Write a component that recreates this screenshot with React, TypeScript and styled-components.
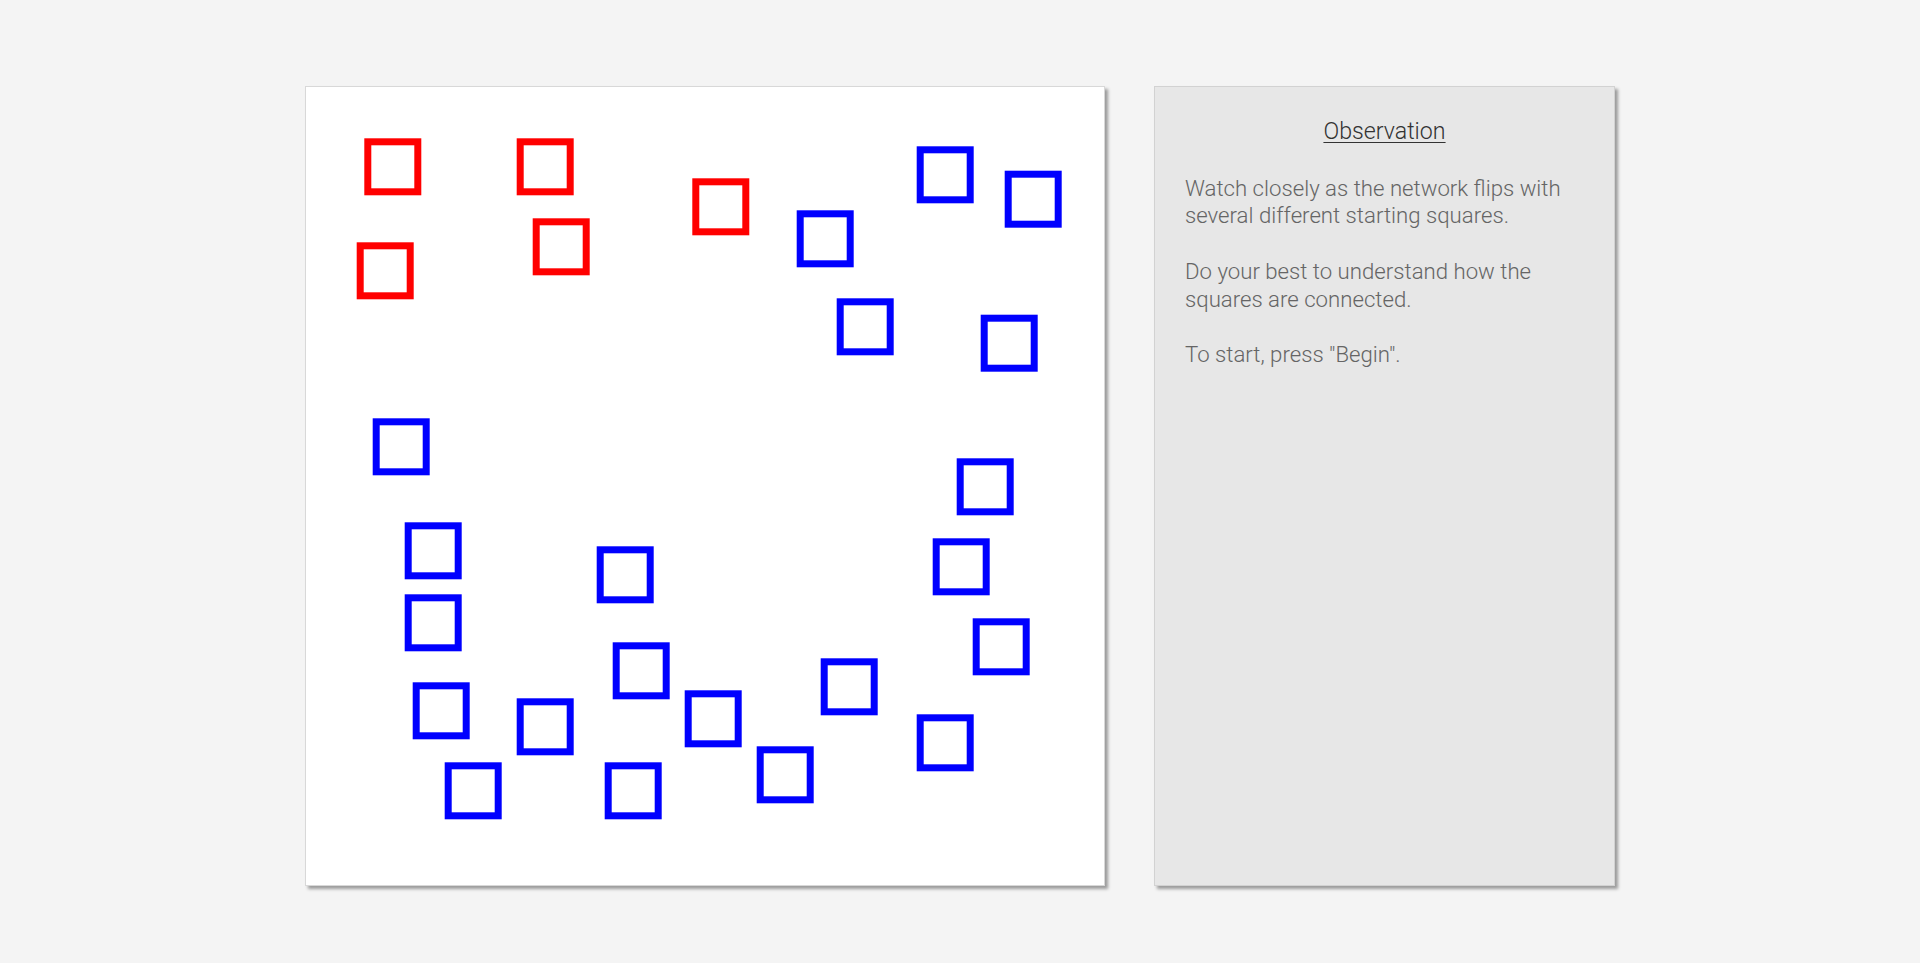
import React from 'react';
import styled, { createGlobalStyle } from 'styled-components';

const GlobalStyle = createGlobalStyle`
  html, body {
    margin: 0;
    padding: 0;
    background: #f4f4f4;
    font-family: Roboto, 'Liberation Sans', Arial, sans-serif;
  }
`;

const Page = styled.div`
  display: flex;
  justify-content: center;
  align-items: flex-start;
  gap: 49px;
  padding-top: 86px;
  min-height: 963px;
  box-sizing: border-box;
`;

const Board = styled.div`
  width: 800px;
  height: 800px;
  box-sizing: border-box;
  background: #ffffff;
  border: 1px solid #d8d8d8;
  box-shadow: 3px 3px 3px #9c9c9c;
`;

const Network = styled.svg`
  display: block;
  width: 798px;
  height: 798px;
`;

const Side = styled.div`
  width: 461px;
  height: 800px;
  box-sizing: border-box;
  background: #e7e7e7;
  border: 1px solid #d2d2d2;
  box-shadow: 3px 3px 3px #9c9c9c;
  padding: 31px 30px;
  font-family: 'Roboto Light', Roboto, 'Liberation Sans', Arial, sans-serif;
  font-weight: 300;
  font-size: 22.2px;
  line-height: 27.7px;
`;

const Title = styled.div`
  text-align: center;
  font-size: 23.2px;
  text-decoration: underline;
  text-underline-offset: 3px;
  text-decoration-thickness: 1px;
  color: #333333;
  margin-bottom: 29px;
`;

const Para = styled.p`
  margin: 0 0 27.7px;
  color: #656565;
`;

// outer top-left corner of each square, measured from the board's outer edge
const reds: [number, number][] = [
  [59.3, 52.3],
  [211.7, 52.3],
  [387.3, 92.3],
  [51.7, 156.3],
  [227.7, 132.3],
];

const blues: [number, number][] = [
  [67.7, 332.3],
  [611.7, 60.3],
  [699.7, 84.7],
  [491.7, 124.3],
  [531.7, 212.3],
  [675.7, 228.7],
  [651.7, 372.3],
  [99.7, 436.3],
  [291.7, 460.3],
  [99.7, 508.3],
  [307.7, 556.3],
  [107.7, 596.3],
  [211.7, 612.3],
  [379.7, 604.3],
  [139.7, 676.3],
  [299.7, 676.3],
  [627.7, 452.3],
  [667.7, 532.3],
  [515.7, 572.3],
  [611.7, 628.3],
  [451.7, 660.3],
];

const Node = ({ at, color }: { at: [number, number]; color: string }) => (
  <rect
    x={at[0] - 1 + 3.5}
    y={at[1] - 1 + 3.5}
    width={50}
    height={50}
    fill="none"
    stroke={color}
    strokeWidth={7}
  />
);

export default function App() {
  return (
    <>
      <GlobalStyle />
      <Page>
        <Board>
          <Network viewBox="0 0 798 798">
            {reds.map((p, i) => (
              <Node key={'r' + i} at={p} color="#ff0000" />
            ))}
            {blues.map((p, i) => (
              <Node key={'b' + i} at={p} color="#0000ff" />
            ))}
          </Network>
        </Board>
        <Side>
          <Title>Observation</Title>
          <Para>
            Watch closely as the network flips with several different starting squares.
          </Para>
          <Para>Do your best to understand how the squares are connected.</Para>
          <Para>To start, press "Begin".</Para>
        </Side>
      </Page>
    </>
  );
}
